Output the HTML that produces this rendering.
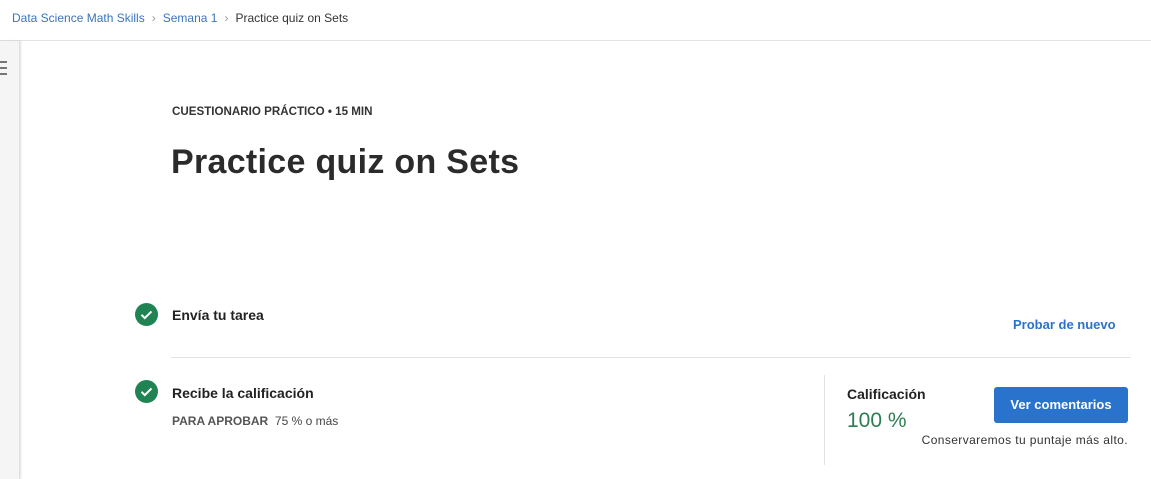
<!DOCTYPE html>
<html><head><meta charset="utf-8"><style>
*{margin:0;padding:0;box-sizing:border-box}
body{width:1151px;height:479px;background:#fff;font-family:"Liberation Sans",Arial,sans-serif;position:relative;overflow:hidden;color:#1f1f1f}
.a{position:absolute;white-space:nowrap}
.bc{top:11px;left:12px;font-size:12px;color:#333}
.bc span.l{color:#3d74b8}
.bc span.s{color:#999;margin:0 7px}
.topline{top:40px;left:0;width:1151px;height:1px;background:#e3e3e3}
.side{top:41px;left:0;width:20px;height:438px;background:#f5f5f5;border-right:1px solid #e0e0e0;box-shadow:1px 0 2px rgba(0,0,0,.12)}
.hb{left:0;width:7px;height:2px;background:#777}
.chk{width:23px;height:23px;border-radius:50%;background:#1f8354}
.chk svg{display:block}
</style></head><body>
<div class="a bc"><span class="l">Data Science Math Skills</span><span class="s">›</span><span class="l">Semana 1</span><span class="s">›</span>Practice quiz on Sets</div>
<div class="a topline"></div>
<div class="a side"></div>
<div class="a hb" style="top:61px"></div>
<div class="a hb" style="top:67px"></div>
<div class="a hb" style="top:73px"></div>

<div class="a" style="top:105px;left:172px;font-size:11.6px;font-weight:bold;color:#333">CUESTIONARIO PRÁCTICO • 15 MIN</div>
<div class="a" style="top:143px;left:171px;font-size:34px;font-weight:bold;color:#2b2b2b;letter-spacing:.3px">Practice quiz on Sets</div>

<div class="a chk" style="top:303px;left:135px"><svg width="23" height="23" viewBox="0 0 23 23"><path d="M6.5 11.8l3.3 3.3 6.7-6.7" stroke="#fff" stroke-width="2" fill="none"/></svg></div>
<div class="a" style="top:307px;left:172px;font-size:14px;font-weight:bold;color:#222">Envía tu tarea</div>
<div class="a" style="top:317px;left:1013px;font-size:13px;font-weight:bold;color:#2a73cc">Probar de nuevo</div>
<div class="a" style="top:357px;left:171px;width:960px;height:1px;background:#e3e3e3"></div>

<div class="a chk" style="top:380px;left:135px"><svg width="23" height="23" viewBox="0 0 23 23"><path d="M6.5 11.8l3.3 3.3 6.7-6.7" stroke="#fff" stroke-width="2" fill="none"/></svg></div>
<div class="a" style="top:385px;left:172px;font-size:14px;font-weight:bold;color:#222">Recibe la calificación</div>
<div class="a" style="top:414px;left:172px;font-size:12px;color:#444"><b style="color:#555">PARA APROBAR</b>&nbsp; 75 % o más</div>

<div class="a" style="top:375px;left:824px;width:1px;height:90px;background:#e3e3e3"></div>
<div class="a" style="top:386px;left:847px;font-size:14px;font-weight:bold;color:#222">Calificación</div>
<div class="a" style="top:409px;left:847px;font-size:21px;color:#2d7d52">100 %</div>
<div class="a" style="top:387px;left:994px;width:134px;height:36px;background:#2a73cc;border-radius:3px;color:#fff;font-size:13px;font-weight:bold;text-align:center;line-height:36px">Ver comentarios</div>
<div class="a" style="top:433px;right:23px;font-size:12px;color:#333;letter-spacing:.4px">Conservaremos tu puntaje más alto.</div>
</body></html>
